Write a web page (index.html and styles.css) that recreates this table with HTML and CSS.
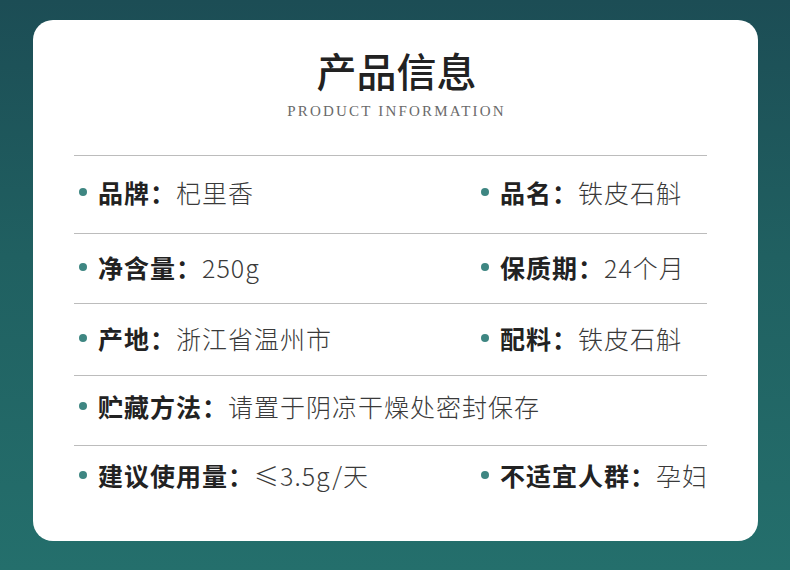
FILE: index.html
```html
<!DOCTYPE html>
<html lang="zh-CN">
<head>
<meta charset="utf-8">
<title>产品信息</title>
<link rel="stylesheet" href="styles.css">
</head>
<body>
<div class="page">
  <section class="card">
    <header class="head">
      <h1 class="title">产品信息</h1>
      <p class="subtitle">PRODUCT INFORMATION</p>
    </header>
    <div class="table">
      <div class="row row-1">
        <div class="item"><span class="dot"></span><span class="label">品牌：</span><span class="value">杞里香</span></div>
        <div class="item"><span class="dot"></span><span class="label">品名：</span><span class="value">铁皮石斛</span></div>
      </div>
      <div class="row row-2">
        <div class="item"><span class="dot"></span><span class="label">净含量：</span><span class="value">250g</span></div>
        <div class="item"><span class="dot"></span><span class="label">保质期：</span><span class="value">24个月</span></div>
      </div>
      <div class="row row-3">
        <div class="item"><span class="dot"></span><span class="label">产地：</span><span class="value">浙江省温州市</span></div>
        <div class="item"><span class="dot"></span><span class="label">配料：</span><span class="value">铁皮石斛</span></div>
      </div>
      <div class="row row-4">
        <div class="item item-wide"><span class="dot"></span><span class="label">贮藏方法：</span><span class="value">请置于阴凉干燥处密封保存</span></div>
      </div>
      <div class="row row-5">
        <div class="item"><span class="dot"></span><span class="label">建议使用量：</span><span class="value">≤3.5g/天</span></div>
        <div class="item"><span class="dot"></span><span class="label">不适宜人群：</span><span class="value">孕妇</span></div>
      </div>
    </div>
  </section>
</div>
</body>
</html>
```

FILE: styles.css
```css
html, body {
  margin: 0;
  padding: 0;
}

body {
  width: 790px;
  height: 570px;
  overflow: hidden;
  background: linear-gradient(180deg, #1c4d55 0%, #206061 45%, #246f6c 100%);
  font-family: "Noto Sans CJK SC", "Noto Sans", sans-serif;
}

.page {
  padding: 20px 32px 0 33px;
}

.card {
  width: 725px;
  height: 521px;
  background: #ffffff;
  border-radius: 20px;
  box-sizing: border-box;
  padding: 30px 51px 0 41px;
}

.head {
  text-align: center;
  margin-bottom: 36px;
}

.title {
  margin: 0;
  font-size: 40px;
  line-height: 40px;
  font-weight: 500;
  color: #222222;
  letter-spacing: 0;
  padding-left: 12px;
}

.subtitle {
  margin: 13px 0 0;
  font-family: "Liberation Serif", "DejaVu Serif", serif;
  font-size: 15px;
  line-height: 16px;
  letter-spacing: 2.2px;
  color: #6a6a6a;
  padding-left: 12px;
}

.table {
  width: 633px;
}

.row {
  display: grid;
  grid-template-columns: 402px 1fr;
  align-items: start;
  box-sizing: border-box;
  border-top: 1px solid #bcbcbc;
  padding-left: 5px;
}

.row-1 {
  height: 78px;
  padding-top: 21px;
}

.row-2 {
  height: 70px;
  padding-top: 18px;
}

.row-3 {
  height: 72px;
  padding-top: 19px;
}

.row-4 {
  height: 70px;
  padding-top: 15px;
}

.row-5 {
  height: 64px;
  padding-top: 14px;
}

.item {
  display: flex;
  align-items: center;
  white-space: nowrap;
  font-size: 25px;
  line-height: 30px;
  letter-spacing: 1px;
}

.item-wide {
  grid-column: 1 / -1;
}

.dot {
  width: 8px;
  height: 8px;
  border-radius: 50%;
  background: #3e8682;
  margin-right: 11px;
  flex: none;
}

.label {
  font-weight: 700;
  color: #222222;
}

.value {
  font-weight: 300;
  color: #3a3a3a;
}
```
